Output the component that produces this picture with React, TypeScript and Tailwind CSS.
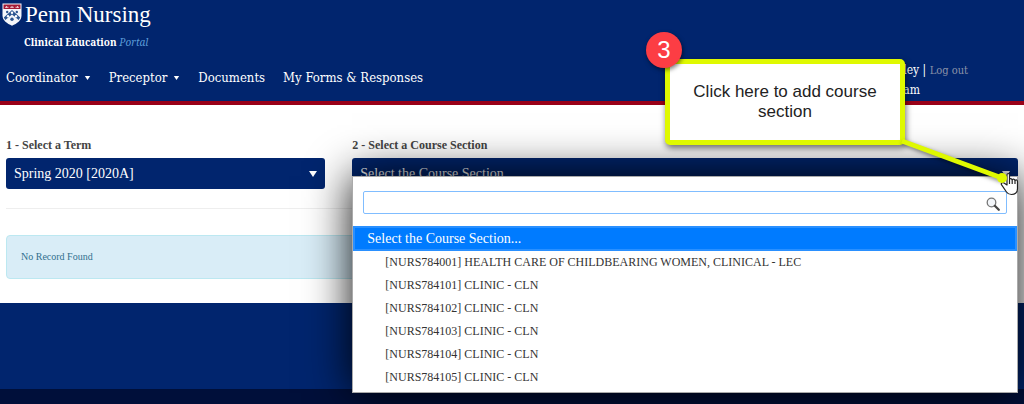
import { useState } from "react";

const menu = [
  { label: "Coordinator", dropdown: true },
  { label: "Preceptor", dropdown: true },
  { label: "Documents", dropdown: false },
  { label: "My Forms & Responses", dropdown: false },
];

const sections = [
  "[NURS784001] HEALTH CARE OF CHILDBEARING WOMEN, CLINICAL - LEC",
  "[NURS784101] CLINIC - CLN",
  "[NURS784102] CLINIC - CLN",
  "[NURS784103] CLINIC - CLN",
  "[NURS784104] CLINIC - CLN",
  "[NURS784105] CLINIC - CLN",
];

function Caret({ className }: { className: string }) {
  return (
    <svg viewBox="0 0 8 6" className={className} aria-hidden="true">
      <path d="M0 0h8L4 6z" fill="currentColor" />
    </svg>
  );
}

function Shield() {
  return (
    <svg viewBox="0 0 20 23" className="h-[23px] w-5" aria-hidden="true">
      <path
        d="M.5.5h19v12c0 5-4.500 8-9.500 10.200C5 20.500.5 17.500.5 12.500z"
        fill="#f4f6fa"
      />
      <path d="M1.500 1.500h17v4.500h-17z" fill="#a31a36" />
      <path
        d="M3 4.300h3.500M8.200 4.300h3.600M13.500 4.300H17M4.500 3v2M10 3v2M15.500 3v2"
        stroke="#e9c3cb"
        strokeWidth="1"
      />
      <path
        d="M1.800 14.500 10 7l8.200 7.500-1.500 2.500L10 11.500 3.300 17z"
        fill="#2b5590"
      />
      <g fill="#fff">
        <circle cx="10" cy="9.800" r="1.200" />
        <circle cx="6" cy="13.200" r="1.200" />
        <circle cx="14" cy="13.200" r="1.200" />
      </g>
      <circle cx="10" cy="16.200" r="1.700" fill="#2b5590" />
      <circle cx="5.200" cy="9" r="1.200" fill="#2b5590" />
      <circle cx="14.800" cy="9" r="1.200" fill="#2b5590" />
    </svg>
  );
}

function Header() {
  return (
    <header className="border-b-4 border-[#990018] bg-[#01256e] text-white">
      <div className="flex justify-between pb-px">
        <div className="flex flex-col">
          <a href="#" className="flex h-9 items-start gap-[3px] pt-[3px] pl-[2px]">
            <Shield />
            <span className="font-['Liberation_Serif',serif] text-[23px] leading-6">
              Penn Nursing
            </span>
          </a>
          <p className="pl-6 font-['Noto_Serif','Liberation_Serif',serif] text-[10px] leading-3 font-bold">
            Clinical Education{" "}
            <span className="font-normal text-[#5b9bd8] italic">Portal</span>
          </p>
          <nav className="mt-5 flex gap-[18px] pl-[6px] font-['DejaVu_Serif_Condensed','DejaVu_Serif',serif] text-[13px] leading-5">
            {menu.map((item) => (
              <a key={item.label} href="#" className="flex items-center gap-[6px]">
                {item.label}
                {item.dropdown && <Caret className="h-1 w-[7px]" />}
              </a>
            ))}
          </nav>
        </div>
        <div className="mr-14 pt-[60px] font-['DejaVu_Serif_Condensed','DejaVu_Serif',serif] text-[12px] leading-5">
          <p>
            ley |{" "}
            <a href="#" className="text-[11px] leading-none text-[#8b93a8]">
              Log out
            </a>
          </p>
          <p>am</p>
        </div>
      </div>
    </header>
  );
}

function CourseSection() {
  const [search, setSearch] = useState("");
  const found = sections.filter((s) =>
    s.toLowerCase().includes(search.toLowerCase()),
  );

  return (
    <div className="relative z-10 col-span-2">
      <label htmlFor="course" className="block text-[12px] leading-5 font-bold text-[#444]">
        2 - Select a Course Section
      </label>
      <div className="relative mt-[3px]">
        <button
          id="course"
          type="button"
          aria-expanded="true"
          className="flex h-[31px] w-full items-center justify-between rounded-[3px] bg-[#01256e] px-2 text-[14px] text-white"
        >
          Select the Course Section
          <Caret className="h-[6px] w-2" />
        </button>
        <div className="absolute inset-x-0 top-[18px] border border-[#aaa] bg-white pt-[14px] pb-[3px] shadow-[0_0_42px_rgba(0,0,0,0.95)]">
          <div className="relative mx-[10px]">
            <input
              type="text"
              aria-label="Search course sections"
              value={search}
              onChange={(e) => setSearch(e.target.value)}
              className="block h-[23px] w-full rounded-[2px] border border-[#80bdff] px-2 text-[14px] outline-none"
            />
            <svg
              viewBox="0 0 14 14"
              className="absolute top-[6px] right-[7px] size-[14px]"
              fill="none"
              aria-hidden="true"
            >
              <circle cx="5.500" cy="5.500" r="4.300" fill="#f3f6fa" stroke="#777" strokeWidth="1.300" />
              <path d="m8.800 8.800 4 4" stroke="#444" strokeWidth="2.200" strokeLinecap="round" />
            </svg>
          </div>
          <ul role="listbox" aria-label="Course sections" className="mt-[12px]">
            <li
              role="option"
              aria-selected="true"
              className="border-2 border-[#2a90ff] bg-[#007bff] pl-3 text-[14px] leading-[21px] text-white"
            >
              Select the Course Section...
            </li>
            {found.map((s) => (
              <li
                key={s}
                role="option"
                aria-selected="false"
                className="pl-8 text-[12px] leading-[23px] text-[#333]"
              >
                {s}
              </li>
            ))}
          </ul>
        </div>
      </div>
    </div>
  );
}

function Callout() {
  return (
    <div className="pointer-events-none absolute top-[59px] right-[119px] z-20 w-60">
      <div className="flex h-[86px] items-center justify-center rounded-[5px] border-[5px] border-[#dff900] bg-white text-center font-['Liberation_Sans',sans-serif] text-[17px] leading-5 text-[#222] shadow-[1px_3px_6px_rgba(0,0,0,0.55)]">
        <p className="px-4">Click here to add course section</p>
      </div>
      <span className="absolute -top-[27px] -left-[19px] flex size-9 items-center justify-center rounded-full bg-[#fc3d44] font-['Liberation_Sans',sans-serif] text-[24px] text-white shadow-[1px_2px_4px_rgba(0,0,0,0.5)]">
        3
      </span>
      <svg
        viewBox="0 0 124 64"
        className="absolute top-[77px] left-[233px] h-16 w-[124px]"
        aria-hidden="true"
      >
        <path
          d="M4 5 104 42"
          stroke="#dff900"
          strokeWidth="5"
          className="drop-shadow-[1px_2px_2px_rgba(0,0,0,0.5)]"
        />
        <path
          d="M109 39v10l-3-2c-2-1-3.500.5-2.200 2.200l4.700 6.800c1.200 1.800 2.500 2.500 5 2.500 4 0 6-2.500 6-6v-7c0-2-2.500-2-2.500-.5 0-2.500-2.800-2.500-2.800-.5 0-2.500-2.700-2.500-2.700-.5V39c0-2-2.500-2-2.500 0zm2.500 5v4m2.700-3.500V48m2.800-3v3"
          fill="#fff"
          stroke="#222"
          strokeWidth="1.200"
          strokeLinejoin="round"
        />
        <circle cx="104" cy="42" r="5" fill="#dff900" />
      </svg>
    </div>
  );
}

export default function App() {
  return (
    <div className="relative flex min-h-screen flex-col overflow-hidden bg-white font-['Liberation_Serif',serif]">
      <Header />
      <main className="px-[6px] pt-[30px] pb-6">
        <div className="grid grid-cols-3 gap-x-[27px]">
          <div>
            <label htmlFor="term" className="block text-[12px] leading-5 font-bold text-[#444]">
              1 - Select a Term
            </label>
            <div className="relative mt-[3px]">
              <select
                id="term"
                className="block h-[31px] w-full appearance-none rounded-[3px] bg-[#01256e] px-2 text-[14px] text-white"
              >
                <option>Spring 2020 [2020A]</option>
              </select>
              <Caret className="pointer-events-none absolute top-[13px] right-2 h-[6px] w-2 text-white" />
            </div>
          </div>
          <CourseSection />
        </div>
        <hr className="mt-[19px] border-[#eee]" />
        <div className="mt-[26px] rounded-[4px] border border-[#bce8f1] bg-[#d9edf7] px-[14px] text-[10px] leading-[42px] text-[#31708f]">
          No Record Found
        </div>
      </main>
      <footer className="flex flex-1 flex-col bg-[#01256e]">
        <div className="h-[86px]" />
        <div className="flex-1 bg-[#000f3a]" />
      </footer>
      <Callout />
    </div>
  );
}
